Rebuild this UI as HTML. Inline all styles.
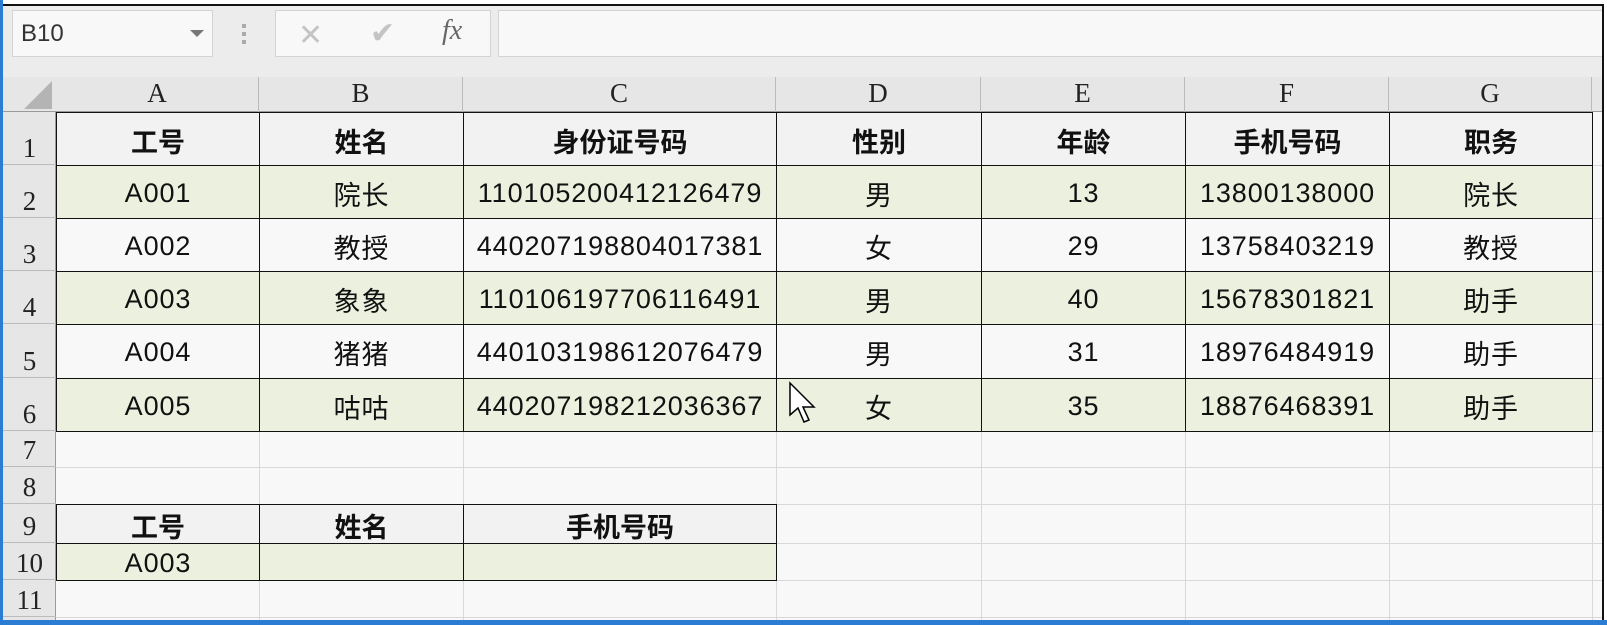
<!DOCTYPE html>
<html><head><meta charset="utf-8"><style>
*{margin:0;padding:0;box-sizing:border-box}
body{width:1607px;height:625px;overflow:hidden;background:#fff;position:relative;font-family:"Liberation Sans","Noto Sans CJK SC",sans-serif}
.a{position:absolute}
.c{position:absolute;display:flex;align-items:center;justify-content:center;font-size:27px;letter-spacing:0.9px;color:#111}
.h{position:absolute;display:flex;align-items:flex-end;justify-content:center;font-family:"Liberation Serif",serif;font-size:27px;color:#222}
.b{font-weight:bold;letter-spacing:0}
</style></head><body>
<div class="a" style="left:3px;top:4px;width:1600px;height:618px;background:#ececec;border-top:2px solid #111"></div>
<div class="a" style="left:0;top:0;width:3px;height:625px;background:#2b7cd3"></div>
<!-- formula bar -->
<div class="a" style="left:12px;top:10px;width:201px;height:47px;background:#f8f8f8;border:1px solid #d4d4d4;font-size:24px;color:#333;padding:9px 0 0 8px">B10</div>
<div class="a" style="left:190px;top:30px;width:0;height:0;border-left:7px solid transparent;border-right:7px solid transparent;border-top:7px solid #777"></div>
<div class="a" style="left:242px;top:24px;width:4px;height:20px;background:repeating-linear-gradient(#aaa 0 4px,transparent 4px 8px)"></div>
<div class="a" style="left:275px;top:10px;width:216px;height:47px;background:#f8f8f8;border:1px solid #d4d4d4"></div>
<div class="a" style="left:298px;top:18px;font-size:30px;color:#c4c4c4">✕</div>
<div class="a" style="left:370px;top:16px;font-size:30px;color:#c4c4c4">✔</div>
<div class="a" style="left:442px;top:15px;font-size:28px;color:#666;font-family:'Liberation Serif',serif;font-style:italic">fx</div>
<div class="a" style="left:498px;top:10px;width:1105px;height:47px;background:#f8f8f8;border-top:1px solid #d4d4d4;border-bottom:1px solid #d4d4d4;border-left:1px solid #d4d4d4"></div>
<!-- header row -->
<div class="a" style="left:3px;top:77px;width:1600px;height:35px;background:#e6e6e6;border-bottom:1px solid #9a9a9a"></div>
<div class="a" style="left:24px;top:81px;width:0;height:0;border-left:28px solid transparent;border-bottom:28px solid #b4b4b4"></div>
<div class="a" style="left:3px;top:112px;width:53px;height:510px;background:#e6e6e6;border-right:1px solid #9a9a9a"></div>
<!-- grid background -->
<div class="a" style="left:56px;top:112px;width:1546px;height:508px;background:#f8f8f8"></div>
<div id="g"></div>
<svg class="a" style="left:788px;top:381px" width="32" height="44" viewBox="0 0 32 44"><path d="M2 2 L2 34 L10 27 L16 41 L21 39 L15 26 L26 26 Z" fill="#fff" stroke="#000" stroke-width="1.5"/></svg>
<div class="a" style="left:1602px;top:4px;width:2px;height:618px;background:#111"></div>
<div class="a" style="left:0;top:620px;width:1607px;height:5px;background:#2b7cd3"></div>
<script>
var cols=[56,259,463,776,981,1185,1389,1592,1602];
var rows=[112,165,218,271,324,378,431,467,504,543,580,617,620];
var letters="ABCDEFG";
var H='';
for(var i=0;i<7;i++)H+='<div class="h" style="left:'+cols[i]+'px;top:77px;width:'+(cols[i+1]-cols[i])+'px;height:35px;border-right:1px solid #bbb;padding-bottom:3px">'+letters[i]+'</div>';
for(var r=0;r<11;r++)H+='<div class="h" style="left:3px;top:'+rows[r]+'px;width:53px;height:'+(rows[r+1]-rows[r])+'px;border-bottom:1px solid #bbb;padding-bottom:0">'+(r+1)+'</div>';
for(var i=1;i<cols.length-1;i++)H+='<div class="a" style="left:'+cols[i]+'px;top:112px;width:1px;height:508px;background:#d8d8d8"></div>';
for(var r=1;r<12;r++)H+='<div class="a" style="left:56px;top:'+rows[r]+'px;width:1546px;height:1px;background:#d8d8d8"></div>';
var data=[["工号","姓名","身份证号码","性别","年龄","手机号码","职务"],
["A001","院长","110105200412126479","男","13","13800138000","院长"],
["A002","教授","440207198804017381","女","29","13758403219","教授"],
["A003","象象","110106197706116491","男","40","15678301821","助手"],
["A004","猪猪","440103198612076479","男","31","18976484919","助手"],
["A005","咕咕","440207198212036367","女","35","18876468391","助手"]];
function cell(x0,x1,y0,y1,t,bg,bold){
 return '<div class="c'+(bold?' b':'')+'" style="left:'+x0+'px;top:'+y0+'px;width:'+(x1-x0+1)+'px;height:'+(y1-y0+1)+'px;background:'+bg+';border:1px solid #111;padding-top:2px">'+t+'</div>';}
for(var r=0;r<6;r++)for(var c=0;c<7;c++){
 var bg=r==0?'#f2f2f2':(r%2==1?'#ebf1de':'#f8f8f8');
 H+=cell(cols[c],cols[c+1],rows[r],rows[r+1],data[r][c],bg,r==0);}
var h2=["工号","姓名","手机号码"];
for(var c=0;c<3;c++){H+=cell(cols[c],cols[c+1],rows[8],rows[9],h2[c],'#f2f2f2',true);
 H+=cell(cols[c],cols[c+1],rows[9],rows[10],c==0?'A003':'','#ebf1de',false);}
document.getElementById('g').innerHTML=H;
</script>
</body></html>
